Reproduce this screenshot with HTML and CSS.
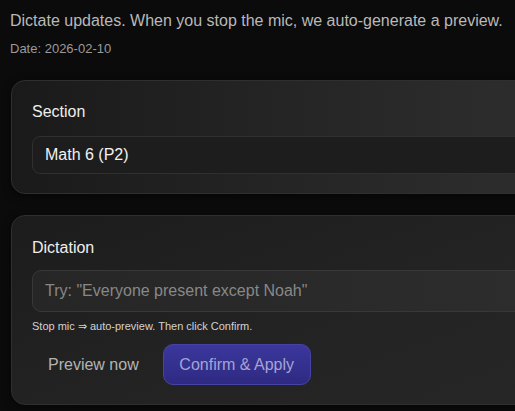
FILE: index.html
```html
<!DOCTYPE html>
<html lang="en">
<head>
<meta charset="utf-8">
<title>Dictation</title>
<link rel="stylesheet" href="styles.css">
</head>
<body>
<main class="page">
  <p class="intro">Dictate updates. When you stop the mic, we auto-generate a preview.</p>
  <p class="date">Date: 2026-02-10</p>

  <section class="card">
    <div class="label">Section</div>
    <div class="select">Math 6 (P2)</div>
  </section>

  <section class="card card-dictation">
    <div class="label">Dictation</div>
    <div class="textbox">Try: "Everyone present except Noah"</div>
    <div class="hint">Stop mic &rArr; auto-preview. Then click Confirm.</div>
    <div class="actions">
      <button class="btn btn-ghost">Preview now</button>
      <button class="btn btn-primary">Confirm &amp; Apply</button>
    </div>
  </section>
</main>
</body>
</html>
```

FILE: styles.css
```css
html, body {
  margin: 0;
  padding: 0;
  background: #0b0b0b;
  overflow: hidden;
}
body {
  font-family: "Liberation Sans", Arial, sans-serif;
  width: 515px;
  height: 411px;
}
.page {
  width: 640px;
  padding: 12px 0 0 10px;
  display: flex;
  flex-direction: column;
}
.intro {
  margin: 0;
  font-size: 16px;
  line-height: 18px;
  color: #b9b9b9;
}
.date {
  margin: 11px 0 0 0;
  font-size: 13px;
  line-height: 15px;
  color: #9a9a9a;
}
.card {
  margin: 24px 0 0 1px;
  border: 1px solid #2f2f2f;
  border-radius: 14px;
  background: linear-gradient(to right, #1a1a1a 0%, #242424 40%, #2c2c2c 75%, #2a2a2a 100%);
  padding: 22px 20px 19px 20px;
  display: flex;
  flex-direction: column;
  box-shadow: 0 2px 8px rgba(0,0,0,0.5);
}
.card-dictation {
  margin-top: 21px;
  background: linear-gradient(160deg, #1c1c1c 0%, #232323 50%, #272727 100%);
  padding-top: 23px;
  padding-bottom: 19px;
}
.label {
  font-size: 16px;
  line-height: 18px;
  color: #eeeeee;
}
.select {
  margin-top: 15px;
  height: 36px;
  border: 1px solid #303030;
  border-radius: 8px;
  background: #1d1d1d;
  padding: 0 12px;
  display: flex;
  align-items: center;
  font-size: 16px;
  color: #f2f2f2;
}
.textbox {
  margin-top: 13px;
  height: 40px;
  border: 1px solid #383838;
  border-radius: 9px;
  background: linear-gradient(to right, #262626, #2e2e2e);
  padding: 0 12px;
  display: flex;
  align-items: center;
  font-size: 16px;
  color: #888888;
}
.hint {
  margin-top: 8px;
  font-size: 11px;
  line-height: 13px;
  color: #d2d2d2;
}
.actions {
  margin-top: 11px;
  display: flex;
  gap: 8px;
}
.btn {
  font-family: "Liberation Sans", Arial, sans-serif;
  font-size: 16px;
  height: 41px;
  border-radius: 10px;
  padding: 0 15px;
  cursor: pointer;
}
.btn-ghost {
  background: transparent;
  border: 1px solid transparent;
  color: #b3b3b3;
}
.btn-primary {
  width: 148px;
  border: 1px solid #4743a6;
  background: linear-gradient(to bottom, #3b379c, #2e2a82);
  color: #a6a3d4;
  padding: 0;
}
```
